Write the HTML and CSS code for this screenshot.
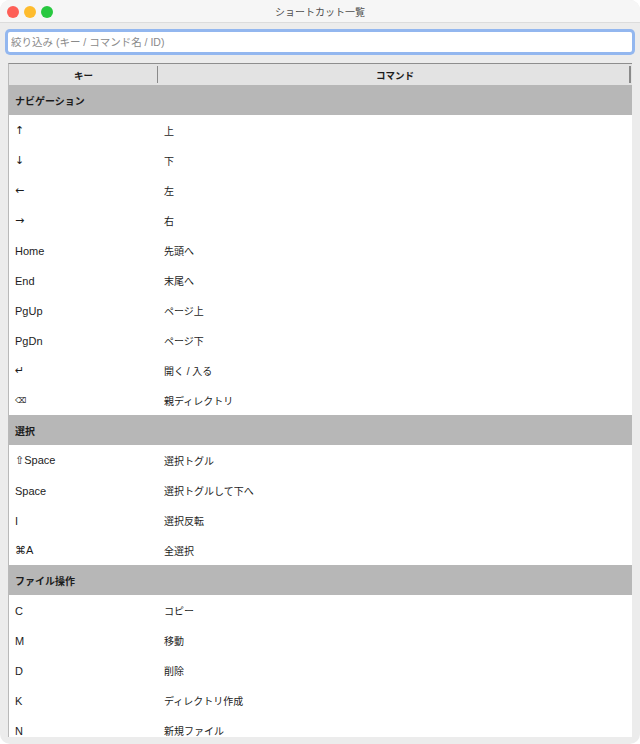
FILE: index.html
```html
<!DOCTYPE html>
<html lang="ja">
<head>
  <meta charset="UTF-8">
  <title>ショートカット一覧</title>
  <meta name="viewport" content="width=device-width, initial-scale=1.0"/>
  <link rel="stylesheet" href="styles.css">
</head>
<body>

<div class="window">
  <!-- タイトルバー -->
  <div class="titlebar">
    <div class="lights">
      <span class="light red"></span>
      <span class="light yellow"></span>
      <span class="light green"></span>
    </div>
    <div class="title">ショートカット一覧</div>
  </div>

  <div class="content">
    <input class="filter" id="filter" placeholder="絞り込み (キー / コマンド名 / ID)" />

    <!-- ショートカット表 -->
    <div class="table-wrap">
      <table class="keys">
        <colgroup>
          <col class="col-key">
          <col>
        </colgroup>
        <thead>
          <tr><th>キー</th><th class="last">コマンド</th></tr>
        </thead>
        <tbody>
          <tr class="group"><td colspan="2">ナビゲーション</td></tr>
          <tr><td class="sym">↑</td><td>上</td></tr>
          <tr><td class="sym">↓</td><td>下</td></tr>
          <tr><td class="sym">←</td><td>左</td></tr>
          <tr><td class="sym">→</td><td>右</td></tr>
          <tr><td>Home</td><td>先頭へ</td></tr>
          <tr><td>End</td><td>末尾へ</td></tr>
          <tr><td>PgUp</td><td>ページ上</td></tr>
          <tr><td>PgDn</td><td>ページ下</td></tr>
          <tr><td class="sym">↵</td><td>開く / 入る</td></tr>
          <tr><td class="sym small">⌫</td><td>親ディレクトリ</td></tr>

          <tr class="group"><td colspan="2">選択</td></tr>
          <tr><td><span class="sym">⇧</span>Space</td><td>選択トグル</td></tr>
          <tr><td>Space</td><td>選択トグルして下へ</td></tr>
          <tr><td>I</td><td>選択反転</td></tr>
          <tr><td><span class="sym">⌘</span>A</td><td>全選択</td></tr>

          <tr class="group"><td colspan="2">ファイル操作</td></tr>
          <tr><td>C</td><td>コピー</td></tr>
          <tr><td>M</td><td>移動</td></tr>
          <tr><td>D</td><td>削除</td></tr>
          <tr><td>K</td><td>ディレクトリ作成</td></tr>
          <tr><td>N</td><td>新規ファイル</td></tr>
        </tbody>
      </table>
    </div>
  </div>
</div>

</body>
</html>
```

FILE: styles.css
```css
html, body {
  margin: 0;
  padding: 0;
  background: #ffffff;
}

body {
  font-family: "Liberation Sans", "Noto Sans CJK JP", sans-serif;
  font-size: 11px;
  color: #1c1c1c;
}

.window {
  width: 640px;
  height: 744px;
  background: #ececec;
  border-radius: 10px;
  overflow: hidden;
  display: flex;
  flex-direction: column;
}

/* タイトルバー */
.titlebar {
  height: 22px;
  flex: none;
  background: #f6f6f6;
  border-bottom: 1px solid #dcdcdc;
  display: flex;
  align-items: center;
  position: relative;
}

.lights {
  display: flex;
  gap: 5px;
  padding-left: 7px;
  padding-top: 2px;
}

.light {
  width: 12px;
  height: 12px;
  border-radius: 50%;
  display: block;
}

.red { background: #fe5f57; }
.yellow { background: #febc2e; }
.green { background: #28c840; }

.title {
  position: absolute;
  left: 0;
  right: 0;
  top: 4px;
  text-align: center;
  font-family: "Noto Sans CJK JP", sans-serif;
  font-size: 10px;
  color: #4e4e4e;
}

.content {
  flex: 1;
  min-height: 0;
  display: flex;
  flex-direction: column;
  padding: 9px 8px 7px 8px;
  gap: 11px;
}

/* 絞り込み入力 */
.filter {
  display: block;
  box-sizing: border-box;
  width: 624px;
  height: 20px;
  margin: 0;
  padding: 0 3px;
  border: none;
  border-radius: 2px;
  background: #ffffff;
  box-shadow: 0 0 0 3px #93b7ef;
  font-family: "Liberation Sans", "Noto Sans CJK JP", sans-serif;
  font-size: 10.5px;
  color: #1c1c1c;
  outline: none;
}

.filter::placeholder {
  color: #8a8a8a;
}

/* 表 */
.table-wrap {
  flex: 1;
  min-height: 0;
  overflow: hidden;
  background: #ffffff;
  border-top: 1px solid #8e8e8e;
  border-left: 1px solid #b9b9b9;
}

.keys {
  width: 100%;
  border-collapse: collapse;
  table-layout: fixed;
}

.col-key {
  width: 149px;
}

.keys th {
  height: 21px;
  padding: 0;
  background: #e3e3e3;
  font-weight: bold;
  font-size: 9.5px;
  text-align: center;
  position: relative;
}

.keys th::after {
  content: "";
  position: absolute;
  right: 0;
  top: 2px;
  bottom: 2px;
  width: 1px;
  background: #8a8a8a;
}

.keys th.last::after {
  right: 1px;
  width: 2px;
}

.keys td {
  box-sizing: border-box;
  height: 30px;
  padding: 1px 6px 0;
  white-space: nowrap;
  vertical-align: middle;
}

.keys td + td {
  font-size: 10px;
  padding-top: 0;
}

.keys tr.group td {
  background: #b7b7b7;
  font-weight: bold;
  font-size: 10px;
  padding-top: 0;
}

.sym {
  font-family: "DejaVu Sans", sans-serif;
  font-size: 11px;
}

.sym.small {
  font-size: 8px;
}
```
